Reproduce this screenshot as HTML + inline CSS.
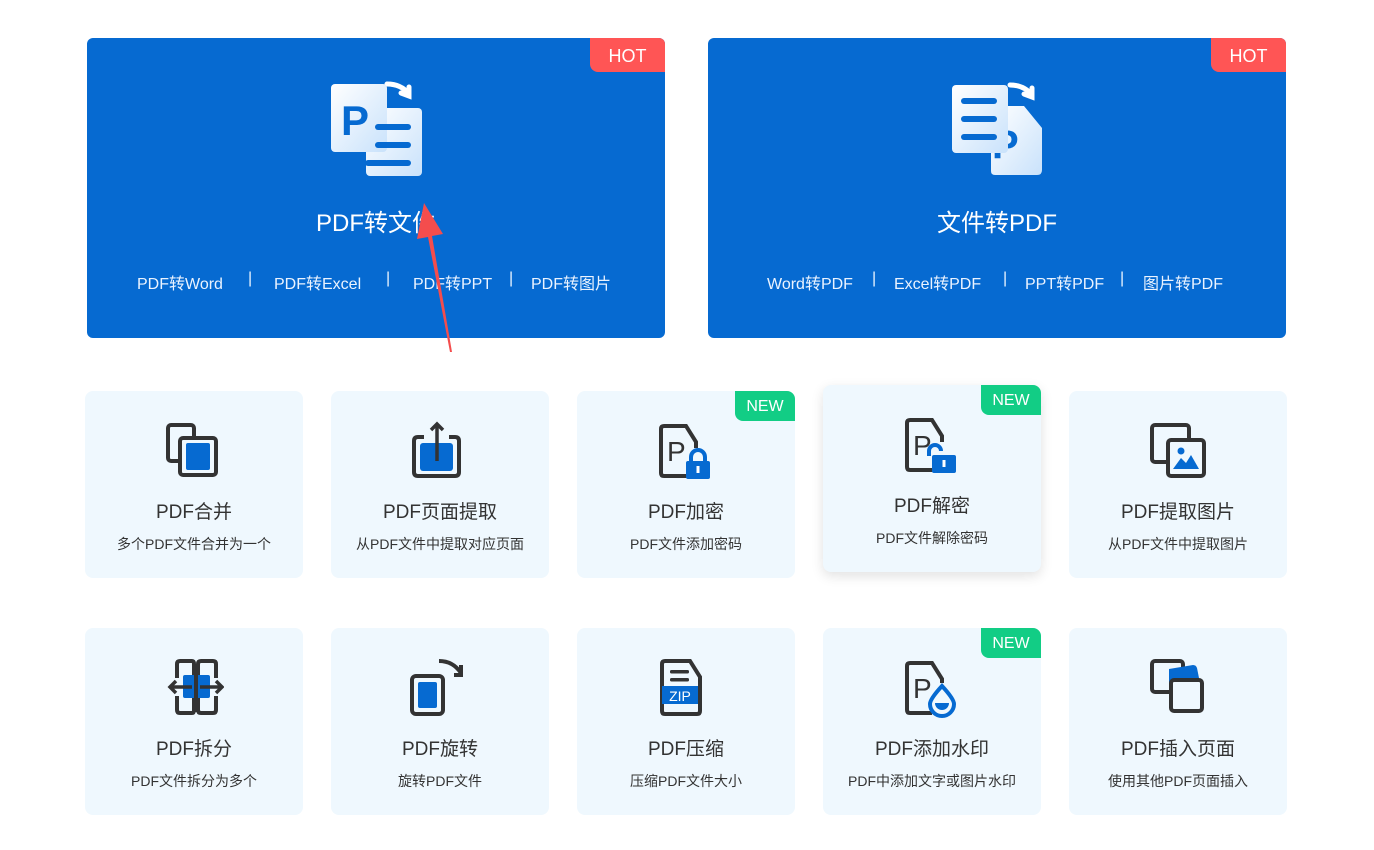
<!DOCTYPE html>
<html><head><meta charset="utf-8"><style>
*{margin:0;padding:0;box-sizing:border-box}
body{width:1374px;height:850px;background:#fff;position:relative;overflow:hidden;font-family:"Liberation Sans","Noto Sans CJK SC",sans-serif}
.big{position:absolute;top:38px;width:578px;height:300px;background:#066ad1;border-radius:6px;color:#fff}
.hot{position:absolute;right:0;top:0;width:75px;height:34px;background:#ff5555;border-radius:0 6px 0 8px;color:#fff;font-size:18px;line-height:36px;text-align:center}
.bt{position:absolute;top:165px;left:0;width:100%;text-align:center;font-size:24px}
.lk{position:absolute;top:232px;font-size:16px;white-space:nowrap;color:#eaf3ff}
.card{position:absolute;width:218px;height:187px;background:#eff8fe;border-radius:8px;text-align:center;color:#333}
.card svg{position:absolute;left:79px;top:30px}
.t{position:absolute;top:106px;width:100%;font-size:19px;color:#333}
.s{position:absolute;top:143px;width:100%;font-size:14px;color:#333}
.new{position:absolute;right:0;top:0;width:60px;height:30px;background:#12cd85;color:#fff;font-size:16px;line-height:31px;border-radius:0 8px 0 8px;text-align:center}
</style></head><body>

<div class="big" style="left:87px">
<div class="hot">HOT</div>
<svg style="position:absolute;left:240px;top:42px" width="100" height="100" viewBox="0 0 100 100">
<defs><linearGradient id="g" x1="0" y1="0" x2="1" y2="1"><stop offset="0" stop-color="#fff"/><stop offset="1" stop-color="#c9e2fb"/></linearGradient></defs>
<path d="M60 4 q14 0 22 10" stroke="#fff" stroke-width="5" fill="none" stroke-linecap="round"/>
<path d="M74 13 l8 3 0 -9" stroke="#fff" stroke-width="5" fill="none" stroke-linecap="round"/>
<rect x="39" y="28" width="56" height="68" rx="4" fill="url(#g)"/>
<rect x="4" y="4" width="56" height="68" rx="4" fill="url(#g)"/>
<text x="14" y="55" font-size="42" fill="#066ad1" font-family="Liberation Sans" font-weight="bold">P</text>
<rect x="48" y="44" width="36" height="6" rx="3" fill="#066ad1"/>
<rect x="48" y="62" width="36" height="6" rx="3" fill="#066ad1"/>
<rect x="38" y="80" width="46" height="6" rx="3" fill="#066ad1"/>
</svg>
<div class="bt">PDF转文件</div>
<span class="lk" style="left:50px">PDF转Word</span><span class="lk" style="left:161px">|</span>
<span class="lk" style="left:187px">PDF转Excel</span><span class="lk" style="left:299px">|</span>
<span class="lk" style="left:326px">PDF转PPT</span><span class="lk" style="left:422px">|</span>
<span class="lk" style="left:444px">PDF转图片</span>
</div>

<div class="big" style="left:708px">
<div class="hot">HOT</div>
<svg style="position:absolute;left:240px;top:42px" width="100" height="100" viewBox="0 0 100 100">
<path d="M62 5 q14 0 22 10" stroke="#fff" stroke-width="5" fill="none" stroke-linecap="round"/>
<path d="M76 14 l8 3 0 -9" stroke="#fff" stroke-width="5" fill="none" stroke-linecap="round"/>
<path d="M43 26 h33 l18 22 v42 q0 5 -5 5 h-42 q-4 0 -4 -4z" fill="url(#g)"/>
<text x="44" y="78" font-size="40" fill="#066ad1" font-weight="bold">P</text>
<rect x="4" y="5" width="56" height="68" rx="4" fill="url(#g)"/>
<rect x="13" y="18" width="36" height="6" rx="3" fill="#066ad1"/>
<rect x="13" y="36" width="36" height="6" rx="3" fill="#066ad1"/>
<rect x="13" y="54" width="36" height="6" rx="3" fill="#066ad1"/>
</svg>
<div class="bt">文件转PDF</div>
<span class="lk" style="left:59px">Word转PDF</span><span class="lk" style="left:164px">|</span>
<span class="lk" style="left:186px">Excel转PDF</span><span class="lk" style="left:295px">|</span>
<span class="lk" style="left:317px">PPT转PDF</span><span class="lk" style="left:412px">|</span>
<span class="lk" style="left:435px">图片转PDF</span>
</div>

<svg style="position:absolute;left:0;top:0" width="1374" height="850"><path d="M452 352 L432 236 L443 234 L424 203 L417 239 L428 237 L450 352Z" fill="#f44d4d"/></svg>

<!-- row 1 -->
<div class="card" style="left:85px;top:391px">
<svg width="60" height="60" viewBox="0 0 60 60"><rect x="4" y="4" width="26" height="36" rx="3" fill="none" stroke="#333" stroke-width="4"/><rect x="16" y="17" width="36" height="37" rx="3" fill="#eff8fe" stroke="#333" stroke-width="4"/><rect x="22" y="22" width="24" height="27" rx="2" fill="#066ad1"/></svg>
<div class="t">PDF合并</div><div class="s">多个PDF文件合并为一个</div></div>

<div class="card" style="left:331px;top:391px">
<svg width="60" height="60" viewBox="0 0 60 60"><path d="M14 16 h-6 q-4 0 -4 4 v31 q0 4 4 4 h37 q4 0 4 -4 v-31 q0 -4 -4 -4 h-6" fill="none" stroke="#333" stroke-width="4"/><rect x="10" y="22" width="33" height="28" rx="3" fill="#066ad1"/><path d="M27 40 v-37 M21 9 l6 -6 6 6" stroke="#333" stroke-width="3.5" fill="none"/></svg>
<div class="t">PDF页面提取</div><div class="s">从PDF文件中提取对应页面</div></div>

<div class="card" style="left:577px;top:391px">
<div class="new">NEW</div>
<svg width="60" height="60" viewBox="0 0 60 60"><path d="M32 55 H8 q-3 0 -3 -3 V8 q0 -3 3 -3 h22 l10 16 v6" fill="none" stroke="#333" stroke-width="4"/><text x="11" y="40" font-size="28" fill="#333">P</text><rect x="30" y="40" width="24" height="18" rx="2" fill="#066ad1"/><path d="M35 41 v-5 a7 7 0 0 1 14 0 v5" fill="none" stroke="#066ad1" stroke-width="4"/><rect x="40.5" y="45" width="3" height="7" fill="#fff"/></svg>
<div class="t">PDF加密</div><div class="s">PDF文件添加密码</div></div>

<div class="card" style="left:823px;top:385px;box-shadow:0 4px 12px rgba(0,0,0,0.12)">
<div class="new">NEW</div>
<svg width="60" height="60" viewBox="0 0 60 60"><path d="M32 55 H8 q-3 0 -3 -3 V8 q0 -3 3 -3 h22 l10 16 v6" fill="none" stroke="#333" stroke-width="4"/><text x="11" y="40" font-size="28" fill="#333">P</text><rect x="30" y="40" width="24" height="18" rx="2" fill="#066ad1"/><path d="M27 41 v-5 a6 6 0 0 1 12 0" fill="none" stroke="#066ad1" stroke-width="4"/><rect x="40.5" y="45" width="3" height="7" fill="#fff"/></svg>
<div class="t">PDF解密</div><div class="s">PDF文件解除密码</div></div>

<div class="card" style="left:1069px;top:391px">
<svg width="60" height="60" viewBox="0 0 60 60"><rect x="4" y="4" width="37" height="37" rx="3" fill="none" stroke="#333" stroke-width="4"/><rect x="20" y="19" width="36" height="36" rx="3" fill="#eff8fe" stroke="#333" stroke-width="4"/><circle cx="33" cy="30" r="3.5" fill="#066ad1"/><path d="M25 48 l8 -11 5 5 5 -8 8 14z" fill="#066ad1"/></svg>
<div class="t">PDF提取图片</div><div class="s">从PDF文件中提取图片</div></div>

<!-- row 2 -->
<div class="card" style="left:85px;top:628px">
<svg width="60" height="60" viewBox="0 0 60 60"><path d="M13 20 v-14 q0 -3 3 -3 h12 q2 0 2 3 v14 M13 38 v14 q0 3 3 3 h12 q2 0 2 -3 v-14 M34 20 v-14 q0 -3 3 -3 h12 q3 0 3 3 v14 M34 38 v14 q0 3 3 3 h12 q3 0 3 -3 v-14" fill="none" stroke="#333" stroke-width="4"/><rect x="19" y="17" width="27" height="23" rx="2" fill="#066ad1"/><path d="M28 29 h-21 M12 23 l-6 6 6 6 M36 29 h21 M52 23 l6 6 -6 6" stroke="#333" stroke-width="3.5" fill="none"/><rect x="30" y="6" width="4" height="48" fill="#333"/></svg>
<div class="t">PDF拆分</div><div class="s">PDF文件拆分为多个</div></div>

<div class="card" style="left:331px;top:628px">
<svg width="60" height="60" viewBox="0 0 60 60"><path d="M29 3 q14 0 22 12 M51 7 v10 h-7" fill="none" stroke="#333" stroke-width="4"/><rect x="2" y="18" width="31" height="38" rx="4" fill="none" stroke="#333" stroke-width="4"/><rect x="8" y="24" width="19" height="26" rx="2" fill="#066ad1"/></svg>
<div class="t">PDF旋转</div><div class="s">旋转PDF文件</div></div>

<div class="card" style="left:577px;top:628px">
<svg width="60" height="60" viewBox="0 0 60 60"><path d="M9 3 h25 l10 16 v34 q0 3 -3 3 h-32 q-3 0 -3 -3 v-47 q0 -3 3 -3z" fill="none" stroke="#333" stroke-width="4"/><rect x="14" y="12" width="19" height="3.5" rx="1.5" fill="#333"/><rect x="14" y="20" width="19" height="3.5" rx="1.5" fill="#333"/><rect x="6" y="28" width="36" height="18" fill="#066ad1"/><text x="24" y="43" font-size="14" fill="#fff" text-anchor="middle">ZIP</text></svg>
<div class="t">PDF压缩</div><div class="s">压缩PDF文件大小</div></div>

<div class="card" style="left:823px;top:628px">
<div class="new">NEW</div>
<svg width="60" height="60" viewBox="0 0 60 60"><path d="M30 55 H8 q-3 0 -3 -3 V8 q0 -3 3 -3 h22 l10 16 v4" fill="none" stroke="#333" stroke-width="4"/><text x="11" y="40" font-size="28" fill="#333">P</text><path d="M40 28 q-12 13 -12 18 a12 12 0 0 0 24 0 q0 -5 -12 -18z" fill="#eff8fe" stroke="#066ad1" stroke-width="4"/><path d="M33 45 h14 a7 7 0 0 1 -14 0z" fill="#066ad1"/></svg>
<div class="t">PDF添加水印</div><div class="s">PDF中添加文字或图片水印</div></div>

<div class="card" style="left:1069px;top:628px">
<svg width="60" height="60" viewBox="0 0 60 60"><rect x="4" y="3" width="31" height="31" rx="3" fill="none" stroke="#333" stroke-width="4"/><path d="M21 11 l24 -4 q3 0 4 3 l3 15 -31 2z" fill="#066ad1"/><rect x="23" y="22" width="31" height="31" rx="3" fill="#eff8fe" stroke="#333" stroke-width="4"/></svg>
<div class="t">PDF插入页面</div><div class="s">使用其他PDF页面插入</div></div>

</body></html>
